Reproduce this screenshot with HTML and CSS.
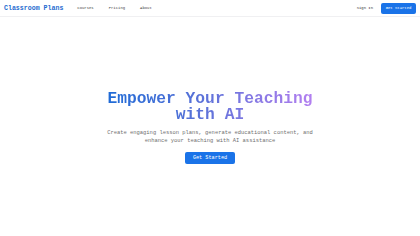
FILE: index.html
```html
<!DOCTYPE html>
<html>
<head>
<meta charset="utf-8">
<link rel="stylesheet" href="styles.css">
</head>
<body>
<div class="page">
  <header class="nav">
    <div class="nav-left">
      <span class="logo">Classroom Plans</span>
      <nav class="links">
        <a>Courses</a>
        <a>Pricing</a>
        <a>About</a>
      </nav>
    </div>
    <div class="nav-right">
      <a class="signin">Sign In</a>
      <button class="btn btn-sm">Get Started</button>
    </div>
  </header>
  <main class="hero">
    <h1 class="title">Empower Your Teaching<br>with AI</h1>
    <p class="sub">Create engaging lesson plans, generate educational content, and<br>enhance your teaching with AI assistance</p>
    <button class="btn btn-lg">Get Started</button>
  </main>
</div>
</body>
</html>
```
FILE: styles.css
```css
* { box-sizing: border-box; }
html, body { margin: 0; padding: 0; background: #fff; }
body { font-family: "Liberation Mono", "DejaVu Sans Mono", monospace; color: #333; }
.page { width: 420px; height: 236px; display: flex; flex-direction: column; }
.nav {
  height: 17px;
  flex: none;
  display: flex;
  align-items: center;
  justify-content: space-between;
  padding: 0 4px;
  border-bottom: 1px solid #f0f0f2;
}
.nav-left { display: flex; align-items: center; }
.logo { font-weight: bold; font-size: 6.6px; color: #1f6bd0; }
.links { display: flex; gap: 15px; margin-left: 14px; }
.links a { font-size: 3.9px; color: #444; }
.nav-right { display: flex; align-items: center; gap: 8px; }
.signin { font-size: 3.9px; color: #333; }
.btn {
  font-family: "Liberation Mono", "DejaVu Sans Mono", monospace;
  background: #1a73e8;
  color: #fff;
  border: none;
  border-radius: 2px;
  cursor: pointer;
}
.btn-sm { font-size: 3.9px; width: 35px; height: 11px; padding: 0; }
.hero {
  flex: 1;
  display: flex;
  flex-direction: column;
  align-items: center;
  justify-content: center;
  text-align: center;
  padding-top: 1px;
}
.title {
  margin: 0;
  font-size: 16.3px;
  line-height: 16.5px;
  font-weight: bold;
  background: linear-gradient(90deg, #1f6bd6 0%, #5a72d8 45%, #b37ff0 100%);
  -webkit-background-clip: text;
  background-clip: text;
  color: transparent;
}
.sub {
  margin: 5px 0 0;
  font-size: 5.45px;
  line-height: 8px;
  color: #707070;
}
.btn-lg { margin-top: 7px; font-size: 5.2px; width: 50px; height: 12px; padding: 0; }
```
